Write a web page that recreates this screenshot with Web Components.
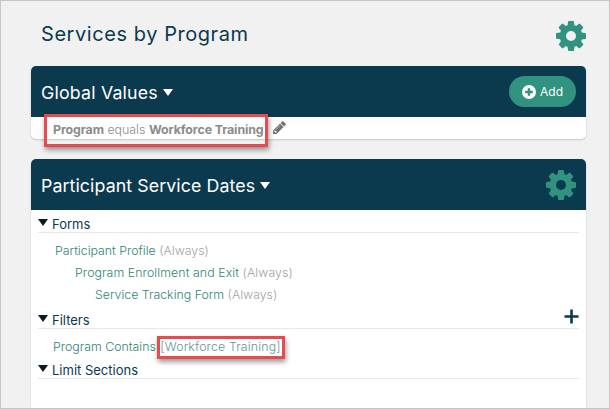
<!DOCTYPE html>
<html><head><meta charset="utf-8">
<style>
html,body{margin:0;padding:0;background:#f1f1f2}
body{width:610px;height:409px;overflow:hidden;font-family:Inter,"Liberation Sans",sans-serif}
</style></head><body>
<script>
const GEAR='M1152 896q0-106-75-181t-181-75-181 75-75 181 75 181 181 75 181-75 75-181zm512-109v222q0 12-8 23t-20 13l-185 28q-19 54-39 91 35 50 107 138 10 12 10 25t-9 23q-27 37-99 108t-94 71q-12 0-26-9l-138-108q-44 23-91 38-16 136-29 186-7 28-36 28h-222q-14 0-24.5-8.5t-11.5-21.5l-28-184q-49-16-90-37l-141 107q-10 9-25 9-14 0-25-11-126-114-165-168-7-10-7-23 0-12 8-23 15-21 51-66.5t54-70.5q-27-50-41-99l-183-27q-13-2-21-12.5t-8-23.5v-222q0-12 8-23t19-13l186-28q14-46 39-92-40-57-107-138-10-12-10-24 0-10 9-23 26-36 98.5-107.5t94.5-71.5q13 0 26 10l138 107q44-23 91-38 16-136 29-186 7-28 36-28h222q14 0 24.5 8.5t11.5 21.5l28 184q49 16 90 37l142-107q9-9 24-9 13 0 25 10 129 119 165 170 7 8 7 22 0 12-8 23-15 21-51 66.5t-54 70.5q26 50 41 98l183 28q13 2 21 12.5t8 23.5z';
const PENCIL='M491 1536l91-91-235-235-91 91v107h128v128h107zm523-928q0-22-22-22-10 0-17 7l-542 542q-7 7-7 17 0 22 22 22 10 0 17-7l542-542q7-7 7-17zm-54-192l416 416-832 832h-416v-416zm683 96q0 53-37 90l-166 166-416-416 166-165q36-38 90-38 53 0 91 38l235 234q37 39 37 91z';
function def(name,html){
  const t=document.createElement('template');t.innerHTML=html;
  customElements.define(name,class extends HTMLElement{
    constructor(){super();this.attachShadow({mode:'open'}).appendChild(t.content.cloneNode(true));}
  });
}
def('gear-icon',`<style>:host{display:block;width:30px;height:30px}svg{display:block;width:30px;height:30px}</style><svg viewBox="128 128 1536 1536"><path fill="#31927f" d="${GEAR}"/></svg>`);
def('app-frame',`<style>:host{display:flex;flex-direction:column;box-sizing:border-box;width:610px;height:409px;border:1px solid #c6c6c6;padding:0 23px 0 30px;background:#f1f1f2;overflow:hidden}</style><slot></slot>`);
def('page-title',`<style>:host{display:flex;justify-content:space-between;align-items:flex-start;height:65px;padding:20px 0 0 10px;box-sizing:border-box}
.t{font-size:20px;font-weight:400;letter-spacing:.56px;line-height:24px;margin-top:1px;color:#0b3a4f}</style><span class="t"><slot></slot></span><slot name="act"></slot>`);
def('panel-card',`<style>:host{display:flex;flex-direction:column;background:#fff;border-radius:5px;box-shadow:0 1px 2px rgba(0,0,0,.18)}
header{display:flex;align-items:center;justify-content:space-between;height:51px;background:#0b3a4f;border-radius:5px 5px 0 0;padding:0 10px;color:#fff;box-sizing:border-box}
h2{margin:1px 0 0;font-weight:400;font-size:17.75px;letter-spacing:.1px;display:flex;align-items:center;gap:5px}
i{display:block;width:0;height:0;border:5.5px solid transparent;border-top:7px solid #fff;border-bottom:0}
</style><header><h2><slot name="title"></slot><i></i></h2><slot name="act"></slot></header><slot></slot>`);
def('pill-btn',`<style>:host{display:inline-flex;align-items:center;gap:4px;height:31px;width:67px;box-sizing:border-box;padding-left:13px;border-radius:16px;background:#31927f;color:#fff;font-size:12px}
svg{width:14px;height:14px;display:block}</style><svg viewBox="0 0 14 14"><circle cx="7" cy="7" r="7" fill="#fff"/><path d="M7 3.2v7.6M3.2 7h7.6" stroke="#31927f" stroke-width="2.4"/></svg><slot></slot>`);
def('global-row',`<style>:host{display:flex;align-items:center;height:22px;padding:0 0 0 22px;font-size:12.4px;color:#8b8b8b;gap:8px}
svg{width:15px;height:15px;display:block;position:relative;top:-1px}
span{white-space:nowrap;font-weight:300;position:relative;top:1px}::slotted(b){font-weight:700;letter-spacing:-.1px}</style><span><slot></slot></span><svg viewBox="0 0 1792 1792"><path fill="#6f7274" d="${PENCIL}"/></svg>`);
def('red-box',`<style>:host{position:absolute;box-sizing:border-box;border:3px solid #e64b4f;box-shadow:1px 3px 5px rgba(0,0,0,.4);pointer-events:none}</style>`);
def('sec-head',`<style>:host{display:flex;align-items:center;height:23px;margin:0 7px;padding-top:6px;box-sizing:border-box;border-bottom:1px solid #e8e8e8;font-size:13px;color:#0b3a4f;gap:4px}
i{display:block;width:0;height:0;border:5.5px solid transparent;border-top:7px solid #0b1a22;border-bottom:0;position:relative;top:-2px}
.a{margin-left:auto;height:15px;margin-top:-7px}</style><i></i><span><slot></slot></span><span class="a"><slot name="act"></slot></span>`);
def('form-line',`<style>:host{display:block;height:22px;line-height:24px;font-size:12.35px;font-weight:300;color:#2f8578;white-space:nowrap}
:host([l="0"]){padding-left:24px}:host([l="1"]){padding-left:44px;letter-spacing:.08px}:host([l="2"]){padding-left:64px}
::slotted(span){color:#a3a3a3}</style><slot></slot>`);
def('plus-icon',`<style>:host{display:block;width:15px;height:15px}svg{display:block}</style><svg width="15" height="15" viewBox="0 0 15 15"><path d="M7.5.5v14M.5 7.5h14" stroke="#0b3a4f" stroke-width="2.6"/></svg>`);
def('v-gap',`<style>:host{display:block;height:6px}</style>`);
</script>
<app-frame>
  <page-title>Services by Program<gear-icon slot="act"></gear-icon></page-title>
  <panel-card style="position:relative">
    <span slot="title" style="letter-spacing:.2px">Global Values</span>
    <pill-btn slot="act">Add</pill-btn>
    <global-row><b>Program</b> equals <b>Workforce Training</b></global-row>
    <red-box style="left:13px;top:48px;width:224px;height:33px"></red-box>
  </panel-card>
  <panel-card style="margin-top:20px;flex:1;position:relative;border-radius:5px 5px 0 0">
    <span slot="title">Participant Service Dates</span>
    <gear-icon slot="act"></gear-icon>
    <sec-head>Forms</sec-head>
    <v-gap></v-gap>
    <form-line l="0">Participant Profile <span>(Always)</span></form-line>
    <form-line l="1">Program Enrollment and Exit <span>(Always)</span></form-line>
    <form-line l="2">Service Tracking Form <span>(Always)</span></form-line>
    <sec-head style="margin-top:1px">Filters<plus-icon slot="act"></plus-icon></sec-head>
    <v-gap></v-gap>
    <form-line l="0" style="padding-left:22px;height:21px">Program Contains <span style="color:#62998f;letter-spacing:.15px;margin-left:1px">[Workforce Training]</span></form-line>
    <sec-head>Limit Sections</sec-head>
    <red-box style="left:126px;top:177px;width:128px;height:23px"></red-box>
  </panel-card>
</app-frame>
</body></html>
